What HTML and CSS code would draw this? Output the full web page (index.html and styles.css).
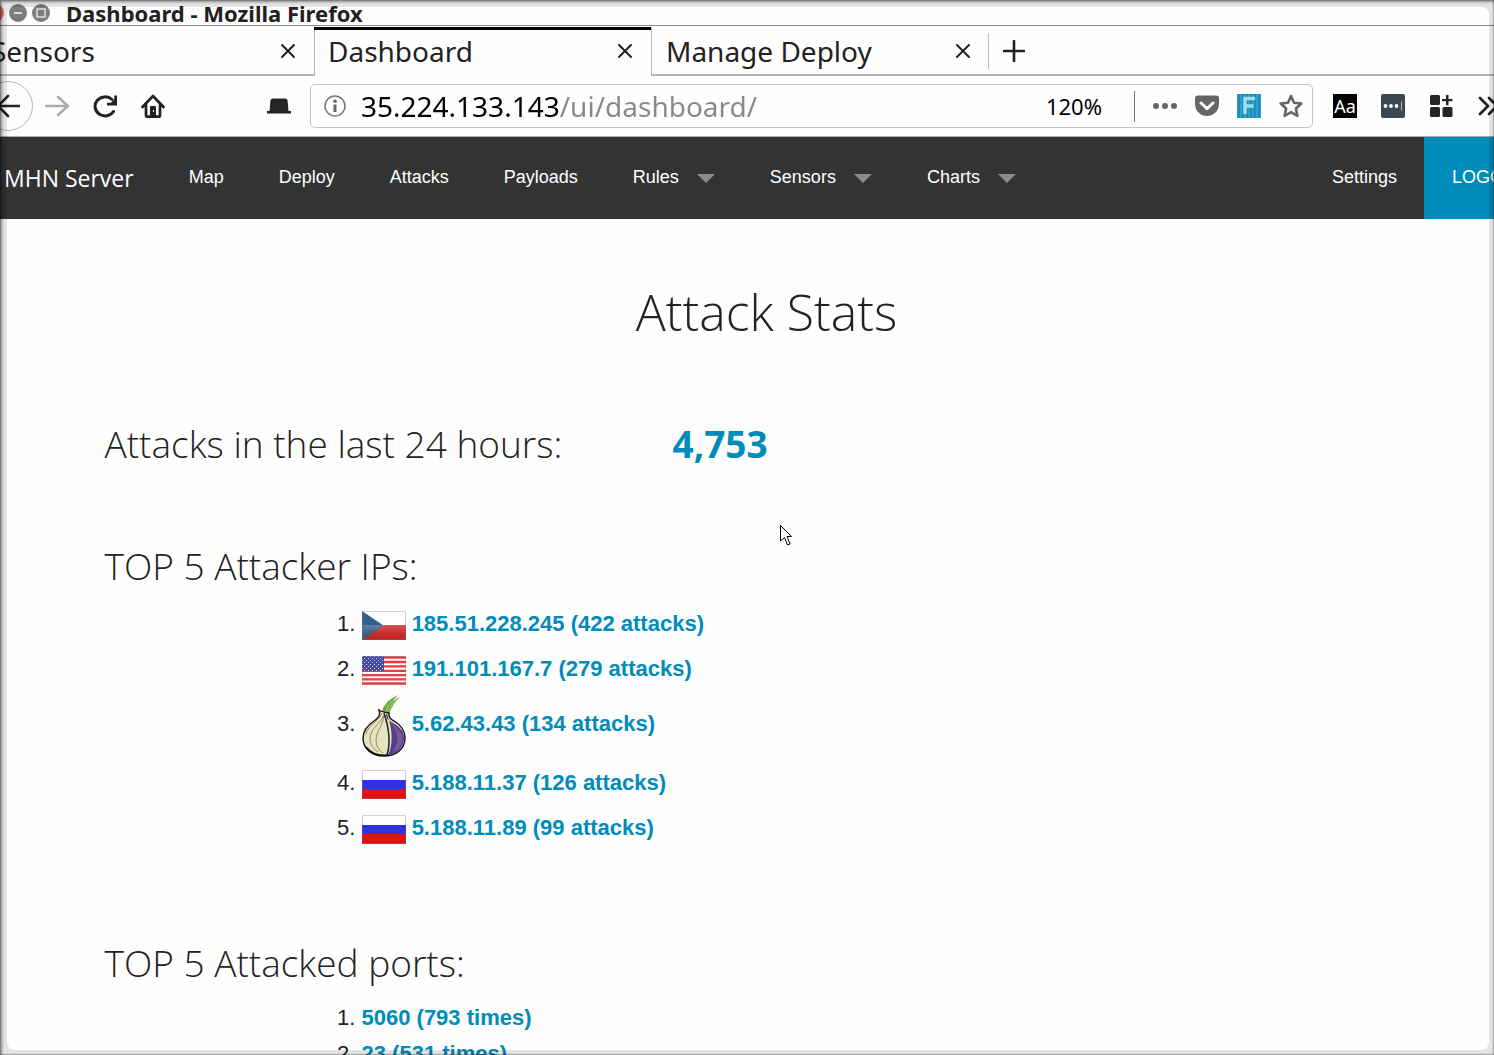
FILE: index.html
```html
<!DOCTYPE html>
<html lang="en">
<head>
<meta charset="utf-8">
<meta name="viewport" content="width=device-width, initial-scale=1">
<title>Dashboard - Mozilla Firefox</title>
<link rel="stylesheet" href="styles.css">
</head>
<body>
<svg class="defs" aria-hidden="true">
  <defs>
    <linearGradient id="gloss" x1="0" y1="0" x2="0" y2="1"><stop offset="0" stop-color="#fff" stop-opacity=".22"/><stop offset="1" stop-color="#000" stop-opacity=".08"/></linearGradient>
    <pattern id="stars" width="4" height="4" patternUnits="userSpaceOnUse"><rect width="4" height="4" fill="#4646a8"/><path d="M0 0h1v1H0zM2 2h1v1H2z" fill="#d8d8ee"/></pattern>
    <symbol id="flag-ru" viewBox="0 0 44 29"><path fill="#fff" d="M0 0h44v10H0z"/><path fill="#3030e4" d="M0 10h44v9H0z"/><path fill="#e01212" d="M0 19h44v10H0z"/><path fill="none" stroke="#777" stroke-opacity=".35" d="M.5.5h43v28H.5z"/></symbol>
    <symbol id="close" viewBox="0 0 16 16"><path d="M2 2l12 12M14 2L2 14" fill="none" stroke="#222" stroke-width="2" stroke-linecap="round"/></symbol>
  </defs>
</svg>
<div class="browser">
  <header class="titlebar">
    <button class="wm wm-close" aria-label="Close"></button>
    <button class="wm" aria-label="Minimize"><svg viewBox="0 0 18 18"><path d="M5 9h8" stroke="#ddd" stroke-width="2"/></svg></button>
    <button class="wm" aria-label="Maximize"><svg viewBox="0 0 18 18"><path d="M5 5h8v8H5z" fill="none" stroke="#ddd" stroke-width="1.6"/></svg></button>
    <span class="window-title">Dashboard - Mozilla Firefox</span>
  </header>

  <div class="tabs">
    <div class="tab"><span>Sensors</span><button aria-label="Close tab"><svg><use href="#close"/></svg></button></div>
    <div class="tab active"><span>Dashboard</span><button aria-label="Close tab"><svg><use href="#close"/></svg></button></div>
    <div class="tab"><span>Manage Deploy</span><button aria-label="Close tab"><svg><use href="#close"/></svg></button></div>
    <div class="tab-rest"><button aria-label="New tab"><svg viewBox="0 0 22 22"><path d="M11 1v20M1 11h20" stroke="#222" stroke-width="2.6" stroke-linecap="round"/></svg></button></div>
  </div>

  <div class="toolbar">
    <button class="back" aria-label="Back"><svg class="icon" viewBox="0 0 24 24"><path d="M23 12H2M12 2L2 12l10 10" fill="none" stroke="#222" stroke-width="2.6" stroke-linecap="round" stroke-linejoin="round"/></svg></button>
    <button class="tool" aria-label="Forward"><svg class="icon" viewBox="0 0 24 24"><path d="M1 12h21M13 3l10 9-10 9" fill="none" stroke="#aaa" stroke-width="2.4" stroke-linecap="round" stroke-linejoin="round"/></svg></button>
    <button class="tool" aria-label="Reload"><svg class="icon" viewBox="0 0 24 24"><path d="M20.500 17.500A10 9.500 0 1 1 19 5.500" fill="none" stroke="#222" stroke-width="3" stroke-linecap="round"/><path d="M24 1.500v10h-10v-2.800h4l3.300-3.300V1.500z" fill="#222"/></svg></button>
    <button class="tool home" aria-label="Home"><svg class="icon" viewBox="0 0 24 24"><path d="M1.500 13L12 2l10.500 11M5 11v10.500q0 1.200 1.200 1.200h11.600q1.200 0 1.200-1.200V11" fill="none" stroke="#222" stroke-width="2.7" stroke-linecap="round" stroke-linejoin="round"/><path d="M9 22v-9q0-1 1-1h4q1 0 1 1v9z" fill="#222"/><path d="M12 16h1v2h-1z" fill="#fff"/></svg></button>
    <button class="tool" aria-label="Private proxy"><svg class="icon" viewBox="0 0 24 24"><path d="M0 17h2.500L3.500 6Q4 4.500 6 4.500h12q2 0 2.500 1.500l1 11H24v2.500H0z" fill="#262424"/></svg></button>
    <div class="urlbar">
      <svg class="info" viewBox="0 0 22 22"><circle cx="11" cy="11" r="10" fill="none" stroke="#777" stroke-width="1.500"/><circle cx="11" cy="6.200" r="1.800" fill="#666"/><path d="M11 9.500v7.500" stroke="#666" stroke-width="3"/></svg>
      <input class="address" type="text" aria-label="Address" value="35.224.133.143/ui/dashboard/">
      <button class="zoom-level">120%</button>
      <span class="divider"></span>
      <button class="inline" aria-label="Page actions"><svg class="icon" viewBox="0 0 24 24"><g fill="#666"><circle cx="3" cy="12" r="3"/><circle cx="12" cy="12" r="3"/><circle cx="21" cy="12" r="3"/></g></svg></button>
      <button class="inline" aria-label="Save to Pocket"><svg class="icon" viewBox="0 0 24 24"><path d="M3 1.500h18q3 0 3 3V10a12 12 0 0 1-24 0V4.500q0-3 3-3z" fill="#666"/><path d="M6 9l6 5.700L18 9" fill="none" stroke="#fff" stroke-width="3" stroke-linecap="round" stroke-linejoin="round"/></svg></button>
      <button class="inline" aria-label="Fireshot"><svg class="icon" viewBox="0 0 24 24"><path fill="#2ba3cf" d="M0 0h24v24H0z"/><path d="M2 0v24M6 0v24M10 0v24M14 0v24M18 0v24M22 0v24" stroke="#1482aa" stroke-width="1.300"/><path d="M8 20V4.500h10M8 12h8.500" fill="none" stroke="#9fdcee" stroke-width="3.600"/></svg></button>
      <button class="inline" aria-label="Bookmark this page"><svg class="icon" viewBox="0 0 24 24"><path d="M12 2l3 6.700 7.300.8-5.400 5 1.500 7.300L12 18.200l-6.400 3.600 1.500-7.300-5.400-5 7.300-.8z" fill="none" stroke="#666" stroke-width="2.600" stroke-linejoin="round"/></svg></button>
    </div>
    <button class="tool font-tool">Aa</button>
    <button class="tool" aria-label="Password manager"><svg class="icon" viewBox="0 0 24 24"><rect width="24" height="24" rx="2" fill="#3b4751"/><g fill="#fff"><circle cx="4.500" cy="12" r="1.900"/><circle cx="10" cy="12" r="1.900"/><circle cx="15.500" cy="12" r="1.900"/></g><path d="M20.500 7.500v9" stroke="#bbb"/></svg></button>
    <button class="tool" aria-label="Extensions"><svg class="icon" viewBox="0 0 24 24"><g fill="#262424"><rect x="1" y="1" width="10" height="10" rx="1.500"/><rect x="1" y="13" width="10" height="10" rx="1.500"/><rect x="13.500" y="13" width="10" height="10" rx="1.500"/><path d="M17 1h2.500v4h4v2.300h-4v4H17v-4h-4V5h4z"/></g></svg></button>
    <button class="tool" aria-label="More tools"><svg class="icon" viewBox="0 0 24 24"><path d="M3 4l8 8-8 8M12 4l8 8-8 8" fill="none" stroke="#222" stroke-width="2.700" stroke-linecap="round" stroke-linejoin="round"/></svg></button>
  </div>

  <nav class="site-nav">
    <a class="brand" href="#">MHN Server</a>
    <a href="#">Map</a>
    <a href="#">Deploy</a>
    <a href="#">Attacks</a>
    <a href="#">Payloads</a>
    <a class="has-menu" href="#">Rules</a>
    <a class="has-menu" href="#">Sensors</a>
    <a class="has-menu" href="#">Charts</a>
    <a class="settings" href="#">Settings</a>
    <a class="logout" href="#">LOGOUT</a>
  </nav>

  <main class="content">
    <h1>Attack Stats</h1>
    <section class="total">
      <h2>Attacks in the last 24 hours:</h2>
      <strong>4,753</strong>
    </section>
    <section class="top">
      <h2>TOP 5 Attacker IPs:</h2>
      <ol class="ips">
        <li><svg class="flag" viewBox="0 0 44 29"><path fill="#fff" d="M0 0h44v14H0z"/><path fill="#d32626" d="M0 14h44v15H0z"/><path fill="#34608f" d="M0 0l21.500 14.500L0 29z"/><path fill="url(#gloss)" d="M0 14h44v15H0z"/><path fill="none" stroke="#777" stroke-opacity=".35" d="M.5.5h43v28H.5z"/></svg> <a href="#">185.51.228.245 (422 attacks)</a></li>
        <li><svg class="flag" viewBox="0 0 44 29"><path fill="#fff" d="M0 0h44v29H0z"/><path d="M0 1.500h44M0 6h44M0 10.400h44M0 14.800h44M0 19.200h44M0 23.400h44M0 27.500h44" stroke="#ee3a3a" stroke-width="2.300"/><path fill="url(#stars)" d="M0 0h22v15H0z"/><path fill="none" stroke="#777" stroke-opacity=".4" d="M.5.5h43v28H.5z"/></svg> <a href="#">191.101.167.7 (279 attacks)</a></li>
        <li><svg class="onion" viewBox="0 0 44 63"><path d="M20 18Q22 7 36 1q-4 4-5 8 3-5 7-6-7 6-11 17z" fill="#69ac3c"/><path d="M23 18Q27 9 33 4M25 19l6-10" fill="none" stroke="#a9d77b"/><path d="M17 16q3 2 10 3-1 5 5 8c7 4 11 9 11 17 0 11-9 18-21 18S1 55 1 44c0-8 5-13 11-17 5-3 7-6 5-11z" fill="#e7e3bd" stroke="#111" stroke-width="1.400"/><path d="M24 20q-1 5 7 9c7 4 11 8 11 15 0 9-7 16-16 17 5-10 5-25-1-41z" fill="#5b3d8c"/><path d="M27 27c8 8 12 18 4 31 7-3 10-8 9-15-1-7-6-10-13-16z" fill="#8770a8" opacity=".6"/><path d="M21 22c-2 8-12 11-13 22 0 6 3 11 8 14M22 21c0 9-8 16-8 25 0 6 3 10 7 13M20 19c-2 7-14 12-16 21" fill="none" stroke="#918a70"/><path d="M22 19c4 12 7 29 3 42" fill="none" stroke="#222" stroke-width="1.500"/><path d="M4 53q8 10 23 8" fill="none" stroke="#111" stroke-width="1.500"/></svg> <a href="#">5.62.43.43 (134 attacks)</a></li>
        <li><svg class="flag"><use href="#flag-ru"/></svg> <a href="#">5.188.11.37 (126 attacks)</a></li>
        <li><svg class="flag"><use href="#flag-ru"/></svg> <a href="#">5.188.11.89 (99 attacks)</a></li>
      </ol>
    </section>
    <section class="top ports-section">
      <h2>TOP 5 Attacked ports:</h2>
      <ol class="ports">
        <li><a href="#">5060 (793 times)</a></li>
        <li><a href="#">23 (531 times)</a></li>
      </ol>
    </section>
  </main>
</div>
<svg class="pointer" viewBox="0 0 12 21" aria-hidden="true"><path d="M.5.500v15.500L4.500 12.500l3 7.500 2.500-1-3-7.500h4.500z" fill="#fff" stroke="#000"/></svg>
</body>
</html>
```

FILE: styles.css
```css
* { box-sizing: border-box; }

body {
  margin: 0;
  height: 100vh;
  overflow: hidden;
  background: #fefefe;
  color: #222;
  font-family: "Liberation Sans", Arial, sans-serif;
}

button {
  padding: 0;
  border: 0;
  background: none;
  color: inherit;
  font: inherit;
}

svg { display: block; }
a { text-decoration: none; }

.defs { position: absolute; width: 0; height: 0; }

/* soft grey frame round the window */
body::before,
body::after {
  content: "";
  position: fixed;
  z-index: 5;
  pointer-events: none;
}
body::before {
  inset: 7px 5px 5px 7px;
  border-radius: 8px;
  box-shadow: 0 0 0 20px rgba(0, 0, 0, .1);
}
body::after {
  inset: 0;
  box-shadow: inset 0 0 0 1px rgba(0, 0, 0, .15), inset 2px 2px 3px rgba(0, 0, 0, .4), inset -1px -1px 2px rgba(0, 0, 0, .2);
}

/* the window runs past both sides of the screen */
.browser {
  margin-left: -23px;
  width: calc(100% + 85px);
}

.titlebar {
  display: flex;
  align-items: center;
  gap: 5px;
  height: 26px;
  padding-left: 9px;
  border-bottom: 1px solid #888;
  font-family: "Noto Sans", sans-serif;
}
.wm { width: 18px; height: 18px; border-radius: 50%; background: #7d7d7d; }
.wm-close { background: #ee7777; }
.window-title { padding-left: 11px; font-size: 22px; font-weight: 700; line-height: 24px; white-space: nowrap; }

.tabs { display: flex; height: 50px; padding-top: 1px; font-family: "Noto Sans", sans-serif; font-size: 28px; }
.tab {
  display: flex;
  align-items: center;
  justify-content: space-between;
  width: 338px;
  margin-right: -1px;
  padding: 1px 18px 0 14px;
  border: solid #b4b4b4;
  border-width: 0 1px 2px 0;
}
.tab.active { border-bottom: 0; padding-bottom: 2px; box-shadow: inset 0 3px #000; }
.tab.active + .tab { border-left: 1px solid #b4b4b4; border-right: 0; }
.tab svg { width: 16px; height: 16px; }
.tab-rest { flex: 1; display: flex; align-items: center; border-bottom: 2px solid #b4b4b4; }
.tab-rest button { padding: 7px 14px; border-left: 1px solid #bbb; }
.tab-rest svg { width: 22px; height: 22px; }

.toolbar {
  display: flex;
  align-items: center;
  gap: 24px;
  height: 61px;
  padding: 0 55px 0 6px;
  border-bottom: 1px solid #aaa;
}
.icon { width: 24px; height: 24px; }
.back {
  display: flex;
  align-items: center;
  justify-content: center;
  width: 50px;
  height: 50px;
  margin-right: -12px;
  border: 1px solid #b4b4b4;
  border-radius: 50%;
}
.home { margin-right: 78px; }
.urlbar {
  flex: 1;
  display: flex;
  align-items: center;
  gap: 18px;
  height: 44px;
  margin-right: -4px;
  margin-left: -5px;
  padding: 0 9px 0 13px;
  border: 1px solid #c4c4c4;
  border-radius: 5px;
}
.info { width: 22px; height: 22px; margin-right: -3px; }
.address {
  flex: 1;
  min-width: 0;
  height: 40px;
  padding: 0;
  border: 0;
  outline: 0;
  background: linear-gradient(90deg, #000 198px, #888 198px);
  background-clip: text;
  -webkit-background-clip: text;
  color: transparent;
  font-family: "Noto Sans", sans-serif;
  font-size: 28px;
}
.zoom-level { padding-right: 14px; color: #000; font-family: "Noto Sans", sans-serif; font-size: 22px; }
.divider { width: 1px; height: 31px; background: #777; }
.font-tool { width: 24px; height: 24px; background: #000; color: #fff; font-family: "Noto Sans", sans-serif; font-size: 18px; line-height: 24px; }

.site-nav {
  display: flex;
  align-items: center;
  gap: 55px;
  height: 82px;
  padding-left: 27px;
  background: #333;
  font-size: 18px;
  line-height: 80px;
  white-space: nowrap;
}
.site-nav a { height: 82px; color: #fff; }
.site-nav .brand { font-family: "Open Sans", sans-serif; font-size: 23px; line-height: 82px; }
.has-menu { display: flex; gap: 18px; }
.has-menu::after {
  content: "";
  align-self: center;
  border: 9px solid transparent;
  border-top-color: #8c8c8c;
  border-bottom: 0;
}
.settings { margin-left: auto; margin-right: -28px; }
.site-nav .logout { padding: 0 28px; background: #008cba; }

.content { max-width: 1324px; margin: 0 auto; padding-top: 57px; }
h1, h2 { margin: 0; font-family: "Open Sans", sans-serif; font-weight: 300; }
h1 { font-size: 50px; line-height: 72px; text-align: center; }
h2 { font-size: 37px; line-height: 54px; }
.total { display: grid; grid-template-columns: 568px 1fr; margin-top: 69px; }
.total strong { color: #008cba; font: 700 37px/54px "Open Sans", sans-serif; }
.top { margin-top: 68px; }
.ports-section { margin-top: 86px; }
ol { margin: 8px 0 0; padding-left: 257px; font-size: 22px; }
ol a { color: #008cba; font-weight: 700; }
.ips { line-height: 45px; }
.ports { margin-top: 10px; line-height: 36px; }
.flag, .onion { display: inline-block; width: 44px; vertical-align: middle; }
.flag { height: 29px; }
.onion { height: 63px; margin: 3px 0; }

.pointer { position: fixed; left: 780px; top: 525px; width: 12px; height: 21px; }
```
